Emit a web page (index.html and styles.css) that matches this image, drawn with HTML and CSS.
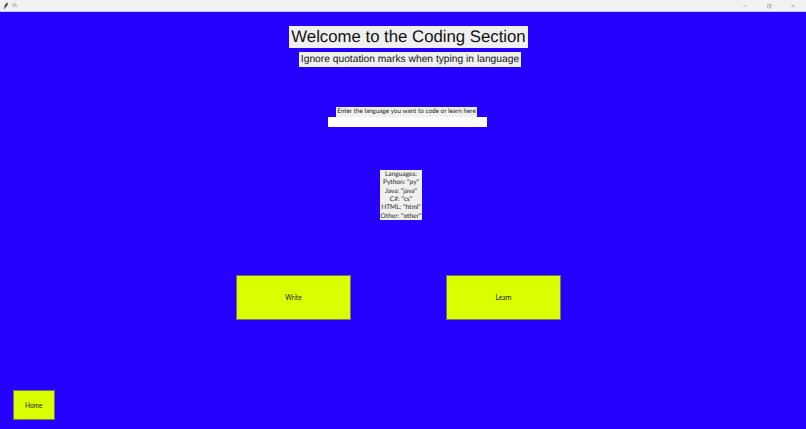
FILE: index.html
```html
<!DOCTYPE html>
<html lang="en">
<head>
<meta charset="utf-8">
<title>tk</title>
<link rel="stylesheet" href="styles.css">
</head>
<body>
<div class="window">
  <header class="titlebar">
    <div class="title-left">
      <svg class="feather" viewBox="0 0 8 10" aria-hidden="true"><path d="M6.6 .3C4 .8 2.4 3 1.9 6L1.2 9.6l.6.1.6-2.5C4.800 6.800 6.500 4 6.600 .3z"/></svg>
      <span class="app-name">tk</span>
    </div>
    <div class="controls">
      <svg class="ctl" viewBox="0 0 10 10" aria-hidden="true"><path d="M2 5h6"/></svg>
      <svg class="ctl" viewBox="0 0 10 10" aria-hidden="true"><path d="M2.500 3.500h4.500v4.500h-4.500zM4 3.500v-1.500h4.500v4.500h-1.500"/></svg>
      <svg class="ctl" viewBox="0 0 10 10" aria-hidden="true"><path d="M2.500 2.500l5 5M7.500 2.500l-5 5"/></svg>
    </div>
  </header>
  <main class="canvas">
    <div class="headings">
      <h1 class="title">Welcome to the Coding Section</h1>
      <h2 class="subtitle">Ignore quotation marks when typing in language</h2>
    </div>
    <div class="prompt">
      <label class="prompt-label" for="lang">Enter the language you want to code or learn here</label>
      <input class="prompt-input" id="lang" type="text">
    </div>
    <div class="languages">Languages:<br>Python: "py"<br>Java: "java"<br>C#: "cs"<br>HTML: "html"<br>Other: "other"</div>
    <div class="actions">
      <button class="btn btn-large"><span class="btn-text">Write</span></button>
      <button class="btn btn-large"><span class="btn-text">Learn</span></button>
    </div>
    <button class="btn btn-home"><span class="btn-text">Home</span></button>
  </main>
</div>
</body>
</html>
```
FILE: styles.css
```css
* { box-sizing: border-box; }
html, body { margin: 0; padding: 0; }
body { width: 806px; height: 429px; overflow: hidden; font-family: Lato, "Open Sans", sans-serif; text-rendering: geometricPrecision; }
.window { display: flex; flex-direction: column; height: 429px; }
.titlebar { display: flex; justify-content: space-between; align-items: center; height: 12px; background: #f2f2f2; border-bottom: 1px solid #c9c4f5; padding: 0 0 0 3px; }
.title-left { display: flex; align-items: center; gap: 3px; }
.feather { width: 6px; height: 8px; fill: #3a4a5c; }
.app-name { font-size: 6px; color: #9a9a9a; line-height: 1; }
.controls { display: flex; gap: 18px; padding-right: 10px; margin-left: auto; }
.ctl { width: 6px; height: 6px; fill: none; stroke: #8d8d8d; stroke-width: .8; }
.canvas { flex: 1; background: #2600ff; display: flex; flex-direction: column; align-items: center; }
.headings { display: flex; flex-direction: column; align-items: center; gap: 4px; margin-top: 14px; padding-left: 11px; }
.title, .subtitle { margin: 0; font-family: "Liberation Sans", Arial, sans-serif; font-weight: 400; background: #f0f0f0; color: #111; white-space: nowrap; }
.title { font-size: 16.750px; line-height: 22px; padding: 0 2px; }
.subtitle { font-size: 10.250px; line-height: 15px; padding: 0 2px; margin-left: 3px; }
.prompt { display: flex; flex-direction: column; align-items: center; margin-top: 40px; padding-left: 8px; }
.prompt-label { background: #f0f0f0; color: #222; font-size: 6.350px; line-height: 10px; padding: 0 1px; white-space: nowrap; margin-right: 1px; }
.prompt-input { width: 159px; height: 10px; border: 0; padding: 0; background: #fff; display: block; }
.languages { margin-top: 43px; padding: 0 1px; background: #f0f0f0; color: #222; font-size: 6.600px; line-height: 8.330px; text-align: center; white-space: nowrap; margin-right: 4px; height: 50px; }
.actions { display: flex; gap: 95px; margin-top: 55px; margin-right: 9px; }
.btn { background: #d9ff00; border: 1px solid #77775a; color: #222; font-family: inherit; font-size: 6.600px; padding: 0 0 1px; }
.btn-large { width: 115px; height: 45px; }
.btn-home { align-self: flex-start; width: 41.500px; height: 30px; margin: 70px 0 0 13px; }
```
